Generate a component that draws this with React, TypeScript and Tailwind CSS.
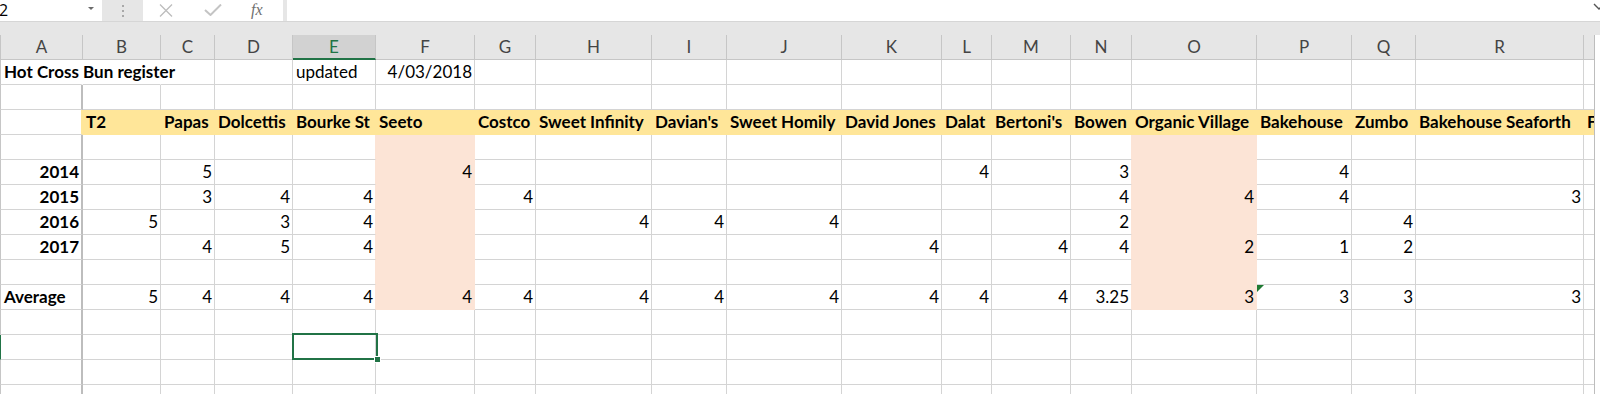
import React from 'react'

type Fill = 'y' | 'p'

interface Cell {
  v?: string
  bold?: boolean
  align?: 'left' | 'right'
  fill?: Fill
}

const COLS = ['A', 'B', 'C', 'D', 'E', 'F', 'G', 'H', 'I', 'J', 'K', 'L', 'M', 'N', 'O', 'P', 'Q', 'R', 'S']

const GRID =
  'grid grid-cols-[83px_78px_54px_78px_83px_99px_61px_116px_75px_115px_100px_50px_79px_61px_125px_95px_64px_168px_80px]'

const names = [
  'T2', 'Papas', 'Dolcettis', 'Bourke St', 'Seeto', 'Costco', 'Sweet Infinity', "Davian's",
  'Sweet Homily', 'David Jones', 'Dalat', "Bertoni's", 'Bowen', 'Organic Village', 'Bakehouse',
  'Zumbo', 'Bakehouse Seaforth', 'Fruitti',
]

// numbers per row, keyed by column letter
const nums = (year: string | null, vals: Record<string, string>, label?: string) => {
  const row: Record<string, Cell> = {}
  if (year) row.A = { v: year, bold: true, align: 'right' }
  if (label) row.A = { v: label, bold: true }
  for (const k of Object.keys(vals)) row[k] = { v: vals[k], align: 'right' }
  return row
}

const rows: Record<string, Cell>[] = [
  {
    A: { v: 'Hot Cross Bun register', bold: true },
    E: { v: 'updated' },
    F: { v: '4/03/2018', align: 'right' },
  },
  {},
  Object.fromEntries(names.map((n, i) => [COLS[i + 1], { v: n, bold: true, fill: 'y' as Fill }])),
  {},
  nums('2014', { C: '5', F: '4', L: '4', N: '3', P: '4' }),
  nums('2015', { C: '3', D: '4', E: '4', G: '4', N: '4', O: '4', P: '4', R: '3' }),
  nums('2016', { B: '5', D: '3', E: '4', H: '4', I: '4', J: '4', N: '2', Q: '4' }),
  nums('2017', { C: '4', D: '5', E: '4', K: '4', M: '4', N: '4', O: '2', P: '1', Q: '2' }),
  {},
  nums(null, {
    B: '5', C: '4', D: '4', E: '4', F: '4', G: '4', H: '4', I: '4', J: '4', K: '4', L: '4', M: '4',
    N: '3.25', O: '3', P: '3', Q: '3', R: '3',
  }, 'Average'),
  {},
  {},
  {},
  {},
]

// peach columns Seeto and Organic Village, rows 4..10
for (let r = 3; r <= 9; r++) {
  for (const c of ['F', 'O']) {
    rows[r][c] = { ...(rows[r][c] || {}), fill: 'p' }
  }
}

function fillOf(r: number, c: number): Fill | undefined {
  return rows[r]?.[COLS[c]]?.fill
}

function GridCell({ r, c }: { r: number; c: number }) {
  const col = COLS[c]
  const cell = rows[r][col] || {}
  const own = cell.fill
  const right = own || fillOf(r, c + 1)
  const spill = r === 0 && c === 0
  const hidden = r === 0 && (c === 0 || c === 1)
  const selected = r === 11 && col === 'E'

  let cls = 'relative h-[25px] border-b whitespace-nowrap pt-[2px] leading-[20px] '
  cls += c === 0 ? 'border-r-2 border-l ' : 'border-r '
  if (own === 'y') cls += 'bg-[#ffe699] border-b-[#ffe699] '
  else if (own === 'p') cls += 'bg-[#fce4d6] border-b-[#fce4d6] '
  else cls += 'bg-white border-b-[#d4d4d4] '
  if (right === 'y') cls += 'border-r-[#ffe699] '
  else if (right === 'p') cls += 'border-r-[#fce4d6] '
  else if (hidden) cls += 'border-r-white '
  else cls += c === 0 ? 'border-r-[#bdbdbd] ' : 'border-r-[#d4d4d4] '
  if (c === 0) cls += r === 11 ? 'border-l-[#217346] ' : 'border-l-[#c6c6c6] '
  cls += cell.align === 'right' ? 'text-right pr-[2px] ' : 'pl-[3px] '
  cls += cell.bold ? 'font-bold ' : ''
  if (spill) cls += 'overflow-visible z-10 '
  else if (selected) cls += 'overflow-visible z-20 '
  else if (r === 9 && col === 'P') cls += 'overflow-visible '
  else cls += 'overflow-hidden '

  return (
    <div className={cls}>
      {cell.v}
      {selected && (
        <div className="absolute left-[-1px] top-[-2px] w-[86px] h-[27px] border-2 border-[#217346]">
          <div className="absolute right-[-5px] bottom-[-5px] w-[7px] h-[7px] bg-[#217346] border border-white" />
        </div>
      )}
      {r === 9 && col === 'P' && (
        <div className="absolute left-0 top-0 w-[7px] h-[7px] bg-[#1f7a32] [clip-path:polygon(0_0,100%_0,0_100%)]" />
      )}
    </div>
  )
}

function FormulaBar() {
  return (
    <div className="flex h-[21px] bg-[#e6e6e6] font-['Open_Sans',sans-serif]">
      <div className="relative w-[102px] bg-white text-[16px] leading-[21px] text-black overflow-hidden">
        <span className="absolute left-[-1px] top-0">2</span>
        <div className="absolute left-[88px] top-[7px] w-0 h-0 border-l-[3px] border-r-[3px] border-t-[3px] border-l-transparent border-r-transparent border-t-[#6b6b6b]" />
      </div>
      <div className="w-[41px] flex flex-col items-center justify-center gap-[3px]">
        <div className="w-[2px] h-[2px] bg-[#a8a8a8]" />
        <div className="w-[2px] h-[2px] bg-[#a8a8a8]" />
        <div className="w-[2px] h-[2px] bg-[#a8a8a8]" />
      </div>
      <div className="relative w-[140px] bg-white">
        <svg className="absolute left-[16px] top-[4px]" width="14" height="13" viewBox="0 0 14 13">
          <path d="M1 0.5 L13 12.5 M13 0.5 L1 12.5" stroke="#bdbdbd" strokeWidth="1.3" fill="none" />
        </svg>
        <svg className="absolute left-[61px] top-[4px]" width="18" height="12" viewBox="0 0 18 12">
          <path d="M1 6 L6.5 11 L17 0.5" stroke="#c4c4c4" strokeWidth="2" fill="none" />
        </svg>
        <span className="absolute left-[108px] top-[0px] text-[16px] leading-[19px] italic text-[#6f6f6f] font-['Liberation_Serif',serif]">
          fx
        </span>
      </div>
      <div className="w-[4px]" />
      <div className="relative flex-1 bg-white overflow-hidden">
        <svg className="absolute right-[-5px] top-[2px]" width="12" height="10" viewBox="0 0 12 10">
          <path d="M1 2 L6 7 L11 2" stroke="#555" strokeWidth="1.4" fill="none" />
        </svg>
      </div>
    </div>
  )
}

export default function App() {
  return (
    <div className="w-[1600px] h-[394px] overflow-hidden bg-[#e6e6e6] text-black">
      <FormulaBar />
      <div className="h-[1px] bg-[#d6d6d6]" />
      <div className="h-[13px]" />
      <div className="flex font-['Lato',sans-serif] text-[17px]">
        <div className="w-[1594px] overflow-hidden">
          {/* column headers */}
          <div className={GRID}>
            {COLS.map((c, i) => (
              <div
                key={c}
                className={`h-[25px] text-center pt-[2px] leading-[20px] border-r ${
                  i === 0 ? 'border-l border-l-[#c6c6c6]' : ''
                } ${
                  c === 'E'
                    ? 'bg-[#d2d2d2] text-[#217346] border-b-2 border-b-[#217346] border-r-[#c6c6c6]'
                    : 'bg-[#e6e6e6] text-[#444444] border-b border-b-[#c6c6c6] border-r-[#c6c6c6]'
                }`}
              >
                {c === 'S' ? '' : c}
              </div>
            ))}
          </div>
          {rows.map((_, r) => (
            <div key={r} className={GRID}>
              {COLS.map((c, ci) => (
                <GridCell key={c} r={r} c={ci} />
              ))}
            </div>
          ))}
        </div>
        <div className="flex-1 bg-white border-l border-[#bdbdbd]" />
      </div>
    </div>
  )
}
